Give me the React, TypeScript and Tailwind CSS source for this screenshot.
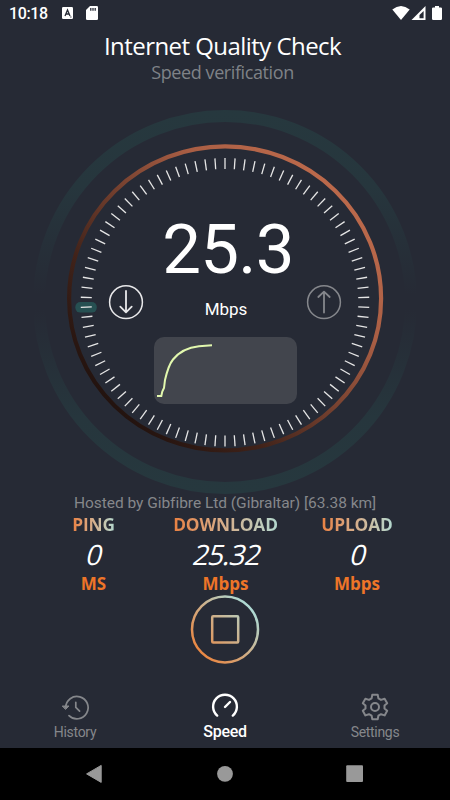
import React from 'react';

const TICKS = Array.from({ length: 90 }, (_, i) => i * 4);

interface Stat {
  label: string;
  value: string;
  unit: string;
  width: string;
}

const stats: Stat[] = [
  { label: 'PING', value: '0', unit: 'MS', width: 'w-[88px]' },
  { label: 'DOWNLOAD', value: '25.32', unit: 'Mbps', width: 'w-[176px]' },
  { label: 'UPLOAD', value: '0', unit: 'Mbps', width: 'w-[87px]' },
];

const StatusBar: React.FC = () => (
  <div className="flex h-[26px] items-center justify-between pl-[9px] pr-[8px] text-white">
    <div className="flex items-center">
      <span className="w-[53px] pt-px text-[16px] leading-[26px] tracking-[-0.4px] font-medium">10:18</span>
      <svg width="11" height="12" viewBox="0 0 11 12">
        <rect width="11" height="12" rx="1.2" fill="#fff" />
        <path d="M3 9 L5.5 3 L8 9 M3.9 7 H7.1" fill="none" stroke="#262a35" strokeWidth="1.3" />
        <path d="M8 10 H9.6" stroke="#262a35" strokeWidth="0.8" />
      </svg>
      <svg width="12" height="14" viewBox="0 0 12 14" className="ml-[13px]">
        <path d="M4 0 H10.7 Q12 0 12 1.3 V12.7 Q12 14 10.7 14 H1.3 Q0 14 0 12.7 V4 Z" fill="#fff" />
        <path d="M4.8 2 V4.8 M7 2 V4.8 M9.2 2 V4.8" stroke="#262a35" strokeWidth="1.3" />
      </svg>
    </div>
    <div className="flex items-center">
      <svg width="18" height="14" viewBox="0 0 18 14">
        <path d="M9 14 L0.3 3.6 Q9 -3.4 17.7 3.6 Z" fill="#fff" />
      </svg>
      <svg width="15" height="14" viewBox="0 0 15 14" className="ml-px">
        <path d="M14.5 0 V14 H0.5 Z" fill="#fff" />
        <path d="M12.6 5 V12.2 H8.5 V8.9 Z" fill="#262a35" />
      </svg>
      <svg width="10" height="14" viewBox="0 0 10 14" className="ml-[6px]">
        <path d="M3 0 H7 V1.4 H8.8 Q10 1.4 10 2.6 V12.8 Q10 14 8.8 14 H1.2 Q0 14 0 12.8 V2.6 Q0 1.4 1.2 1.4 H3 Z" fill="#fff" />
      </svg>
    </div>
  </div>
);

const Dial: React.FC = () => (
  <svg width="450" height="404" viewBox="0 90 450 404" className="col-start-1 row-start-1">
    <defs>
      <linearGradient id="halo" x1="0" y1="110" x2="0" y2="494" gradientUnits="userSpaceOnUse">
        <stop offset="0" stopColor="#26383e" />
        <stop offset="0.2" stopColor="#26363d" />
        <stop offset="0.48" stopColor="#262a35" />
        <stop offset="0.52" stopColor="#262a35" />
        <stop offset="0.8" stopColor="#26363d" />
        <stop offset="1" stopColor="#26383e" />
      </linearGradient>
      <linearGradient id="copper" x1="336" y1="191" x2="114" y2="406" gradientUnits="userSpaceOnUse">
        <stop offset="0" stopColor="#bb694b" />
        <stop offset="0.25" stopColor="#a95e44" />
        <stop offset="0.75" stopColor="#41231a" />
        <stop offset="1" stopColor="#23130f" />
      </linearGradient>
    </defs>
    <circle cx="225" cy="302" r="186" fill="none" stroke="url(#halo)" strokeWidth="12" />
    <ellipse cx="225.1" cy="298.4" rx="156" ry="152" fill="none" stroke="url(#copper)" strokeWidth="4.2" />
    <rect x="75.3" y="302" width="21.5" height="10.6" rx="5" fill="#265052" />
    {TICKS.map((deg) => (
      <line
        key={deg}
        x1="225"
        y1="158"
        x2="225"
        y2="169"
        stroke="#e6e6e6"
        strokeWidth="1.3"
        transform={`rotate(${deg} 225 302.3)`}
      />
    ))}
  </svg>
);

const ArrowButton: React.FC<{ up?: boolean }> = ({ up }) => (
  <svg
    width="36"
    height="36"
    viewBox="0 0 36 36"
    fill="none"
    stroke={up ? '#85878c' : '#e8e8ea'}
    strokeWidth="1.8"
    strokeLinecap="round"
    strokeLinejoin="round"
  >
    <circle cx="18" cy="18.2" r="16.4" strokeWidth="1.5" />
    {up ? <path d="M18 28.5 V8 M12.3 13 L18 7.6 L23.7 13" /> : <path d="M18 7 V28 M12.3 22.7 L18 28.3 L23.7 22.7" />}
  </svg>
);

const Gauge: React.FC = () => (
  <div className="grid h-[404px]">
    <Dial />
    <div className="z-10 col-start-1 row-start-1 flex flex-col items-center pt-[126px]">
      <div className="pl-[6px] text-[69px] leading-[68px] tracking-[-0.8px] text-white">25.3</div>
      <div className="flex w-[234px] items-start justify-between">
        <ArrowButton />
        <div className="pl-[2px] pt-[15px] text-[17px] leading-[20px] text-white">Mbps</div>
        <ArrowButton up />
      </div>
      <div className="mt-[17px] h-[67px] w-[143px] rounded-[10px] bg-[#42454d]">
        <svg width="143" height="67" viewBox="0 0 143 67" fill="none">
          <path
            d="M3 59 H7.3 L8.3 54.5 L10 51 L11 43 Q14.5 28 19 22.5 Q28 11 45 9.2 L58 8.3"
            stroke="#e2f8ae"
            strokeWidth="2"
          />
        </svg>
      </div>
    </div>
  </div>
);

const StopButton: React.FC = () => (
  <svg width="70" height="70" viewBox="0 0 70 70" fill="none" stroke="url(#stop)">
    <defs>
      <linearGradient id="stop" x1="12" y1="60" x2="60" y2="14" gradientUnits="userSpaceOnUse">
        <stop offset="0" stopColor="#e98743" />
        <stop offset="0.5" stopColor="#cfae87" />
        <stop offset="1" stopColor="#aed9d3" />
      </linearGradient>
    </defs>
    <circle cx="35" cy="35.4" r="33" strokeWidth="2.5" />
    <rect x="22.2" y="22.2" width="26" height="26.4" rx="1" strokeWidth="2.5" />
  </svg>
);

const NavItem: React.FC<{ label: string; active?: boolean; children: React.ReactNode }> = ({ label, active, children }) => (
  <div className={`flex w-[100px] flex-col items-center ${active ? 'text-white' : 'text-[#85878b]'}`}>
    <div className="flex h-[30px] items-center justify-center">{children}</div>
    <span
      className={
        active ? 'text-[16px] leading-[19px] tracking-[-0.3px] font-medium' : 'pt-[2px] text-[14px] leading-[17px] tracking-[-0.3px]'
      }
    >
      {label}
    </span>
  </div>
);

const App: React.FC = () => {
  return (
    <div className="flex h-[800px] w-[450px] flex-col overflow-hidden bg-[#262a35] font-['Roboto',sans-serif]">
      <StatusBar />
      <header className="h-[64px] text-center font-['Open_Sans','Noto_Sans',sans-serif]">
        <h1 className="pt-[3px] pr-[5px] text-[24px] leading-[34px] tracking-[-0.55px] text-white">Internet Quality Check</h1>
        <p className="pr-[5px] text-[18px] leading-[18px] tracking-[-0.4px] text-[#7f8287]">Speed verification</p>
      </header>

      <Gauge />

      <p className="h-[20px] text-center text-[15.5px] leading-[19px] tracking-[-0.03px] text-[#85878b]">
        Hosted by Gibfibre Ltd (Gibraltar) [63.38 km]
      </p>

      <div className="flex h-[80px] justify-center font-['Open_Sans','Noto_Sans',sans-serif]">
        {stats.map((s) => (
          <div key={s.label} className={`flex flex-col items-center ${s.width}`}>
            <span className="bg-linear-to-r from-[#e98040] to-[#b2d8cf] bg-clip-text text-[17.3px] leading-[22px] tracking-[-0.1px] font-bold text-transparent">
              {s.label}
            </span>
            <span className="-skew-x-[14deg] pl-[3px] text-[28px] leading-[37px] tracking-[-0.9px] text-white">{s.value}</span>
            <span className="text-[17px] leading-[21px] font-bold text-[#ee7528]">{s.unit}</span>
          </div>
        ))}
      </div>

      <div className="flex h-[98px] justify-center">
        <StopButton />
      </div>

      <nav className="flex h-[56px] justify-between px-[25px]">
        <NavItem label="History">
          <svg width="28" height="28" viewBox="0 0 28 28" fill="none" stroke="currentColor" strokeWidth="1.7" strokeLinecap="round">
            <path d="M4.7 14.5 A11.2 11.2 0 1 1 8 22.6" />
            <path d="M1.6 13 H8 L4.8 16.2 Z" fill="currentColor" strokeWidth="1" strokeLinejoin="round" />
            <path d="M14.8 9.3 V14.4 L18.6 18.2" />
          </svg>
        </NavItem>
        <NavItem label="Speed" active>
          <svg width="28" height="28" viewBox="0 0 28 28" fill="none" stroke="currentColor" strokeWidth="2.4" strokeLinecap="round">
            <path d="M6.2 22.6 A11.9 11.9 0 1 1 21.8 22.6" />
            <path d="M14 14 L19 9" />
          </svg>
        </NavItem>
        <NavItem label="Settings">
          <svg width="28" height="28" viewBox="0 0 28 28" fill="none" stroke="currentColor" strokeWidth="2" strokeLinejoin="round">
            <path d="M11.3 1.8 H16.7 L17.4 5.4 L20 6.9 L23.6 5.7 L26.2 10.3 L23.5 12.6 V15.5 L26.2 17.8 L23.6 22.4 L20 21.2 L17.4 22.7 L16.7 26.3 H11.3 L10.6 22.7 L8 21.2 L4.4 22.4 L1.8 17.8 L4.5 15.5 V12.6 L1.8 10.3 L4.4 5.7 L8 6.9 L10.6 5.4 Z" />
            <circle cx="14" cy="14" r="4" />
          </svg>
        </NavItem>
      </nav>

      <div className="h-[52px] bg-black">
        <svg width="450" height="52" viewBox="0 0 450 52" fill="#999">
          <path d="M86.6 25.9 L101.2 17.4 V34.4 Z" stroke="#999" strokeWidth="1" strokeLinejoin="round" />
          <circle cx="225" cy="25.8" r="7.9" />
          <rect x="346.2" y="17.3" width="16.8" height="16.8" rx="1" />
        </svg>
      </div>
    </div>
  );
};

export default App;
